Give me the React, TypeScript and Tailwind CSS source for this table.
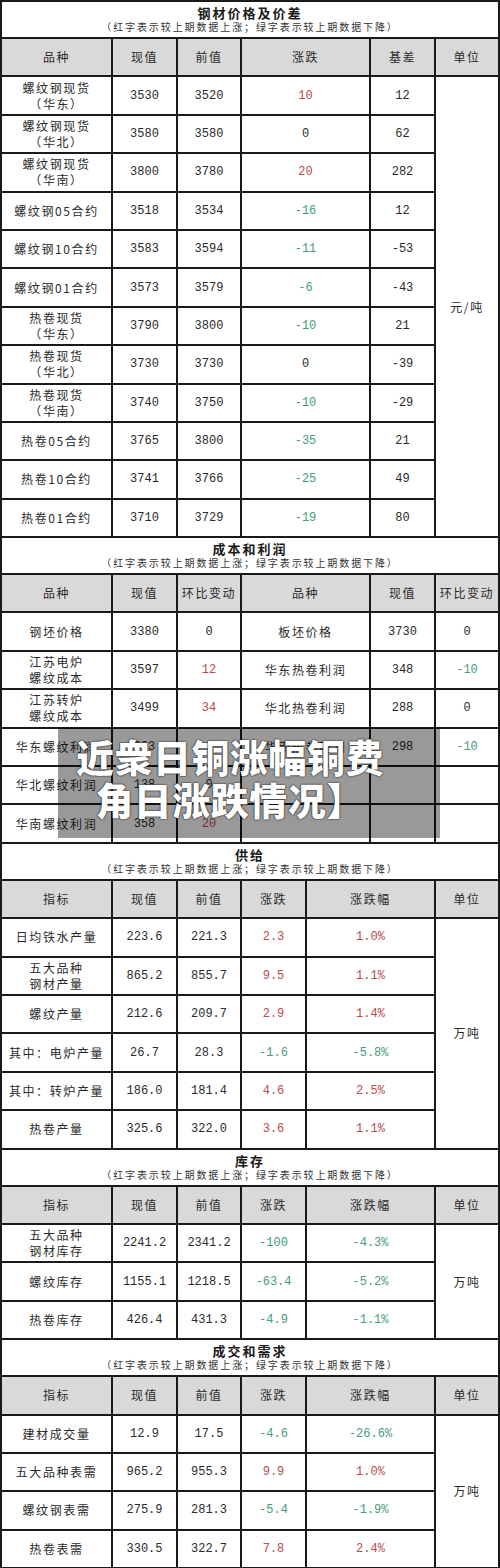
import React from "react";

type Tone = "r" | "g" | undefined;

type Cell = {
  t: string;
  tone?: Tone;
  span?: number;
  rows?: number;
  num?: boolean;
};

const cjk = "font-['Noto_Sans_CJK_SC','Noto_Sans',sans-serif]";
const mono = "font-['Liberation_Mono','Noto_Sans_CJK_SC',monospace]";

const NOTE = "（红字表示较上期数据上涨；绿字表示较上期数据下降）";

function toneClass(tone: Tone) {
  if (tone === "r") return "text-[#b84b4b]";
  if (tone === "g") return "text-[#449c7c]";
  return "text-[#2a2a2a]";
}

function Td({ cell, head }: { cell: Cell; head?: boolean }) {
  const lines = cell.t.split("\n");
  return (
    <td
      colSpan={cell.span}
      rowSpan={cell.rows}
      className={`border-2 border-[#1a1a1a] p-0 text-center align-middle leading-[16px] ${
        head ? "bg-[#d9d9d9]" : "bg-white"
      } ${cell.num ? `${mono} text-[12px]` : `${cjk} text-[12px] tracking-[1.6px]`} ${toneClass(
        cell.tone
      )}`}
    >
      {lines.map((l, i) => (
        <div key={i}>{l}</div>
      ))}
    </td>
  );
}

function Title({ name }: { name: string }) {
  return (
    <tr className="h-[37px]">
      <td colSpan={7} className="border-2 border-[#1a1a1a] bg-white p-0 text-center">
        <div className={`${cjk} text-[13px] font-bold leading-[15px] tracking-[2px] text-[#1a1a1a]`}>
          {name}
        </div>
        <div className={`${cjk} text-[10px] leading-[14px] tracking-[1.9px] text-[#333]`}>{NOTE}</div>
      </td>
    </tr>
  );
}

function Row({ cells, head }: { cells: Cell[]; head?: boolean }) {
  return (
    <tr className="h-[38.4px]">
      {cells.map((c, i) => (
        <Td key={i} cell={c} head={head} />
      ))}
    </tr>
  );
}

const n = (t: string, tone?: Tone, span?: number): Cell => ({ t, tone, span, num: true });
const s = (t: string, span?: number): Cell => ({ t, span });

const steelHead: Cell[] = [s("品种"), s("现值"), s("前值"), s("涨跌", 2), s("基差"), s("单位")];

const steelRows: Cell[][] = [
  [s("螺纹钢现货\n（华东）"), n("3530"), n("3520"), n("10", "r", 2), n("12"), { t: "元/吨", rows: 12 }],
  [s("螺纹钢现货\n（华北）"), n("3580"), n("3580"), n("0", undefined, 2), n("62")],
  [s("螺纹钢现货\n（华南）"), n("3800"), n("3780"), n("20", "r", 2), n("282")],
  [s("螺纹钢05合约"), n("3518"), n("3534"), n("-16", "g", 2), n("12")],
  [s("螺纹钢10合约"), n("3583"), n("3594"), n("-11", "g", 2), n("-53")],
  [s("螺纹钢01合约"), n("3573"), n("3579"), n("-6", "g", 2), n("-43")],
  [s("热卷现货\n（华东）"), n("3790"), n("3800"), n("-10", "g", 2), n("21")],
  [s("热卷现货\n（华北）"), n("3730"), n("3730"), n("0", undefined, 2), n("-39")],
  [s("热卷现货\n（华南）"), n("3740"), n("3750"), n("-10", "g", 2), n("-29")],
  [s("热卷05合约"), n("3765"), n("3800"), n("-35", "g", 2), n("21")],
  [s("热卷10合约"), n("3741"), n("3766"), n("-25", "g", 2), n("49")],
  [s("热卷01合约"), n("3710"), n("3729"), n("-19", "g", 2), n("80")],
];

const costHead: Cell[] = [s("品种"), s("现值"), s("环比变动"), s("品种", 2), s("现值"), s("环比变动")];

const costRows: Cell[][] = [
  [s("钢坯价格"), n("3380"), n("0"), s("板坯价格", 2), n("3730"), n("0")],
  [s("江苏电炉\n螺纹成本"), n("3597"), n("12", "r"), s("华东热卷利润", 2), n("348"), n("-10", "g")],
  [s("江苏转炉\n螺纹成本"), n("3499"), n("34", "r"), s("华北热卷利润", 2), n("288"), n("0")],
  [s("华东螺纹利润"), n("323"), n("0"), s("华南热卷利润", 2), n("298"), n("-10", "g")],
  [s("华北螺纹利润"), n("138"), n("0"), s("", 2), n(""), n("")],
  [s("华南螺纹利润"), n("358"), n("20", "r"), s("", 2), n(""), n("")],
];

const idxHead: Cell[] = [s("指标"), s("现值"), s("前值"), s("涨跌"), s("涨跌幅", 2), s("单位")];

const supplyRows: Cell[][] = [
  [s("日均铁水产量"), n("223.6"), n("221.3"), n("2.3", "r"), n("1.0%", "r", 2), { t: "万吨", rows: 6 }],
  [s("五大品种\n钢材产量"), n("865.2"), n("855.7"), n("9.5", "r"), n("1.1%", "r", 2)],
  [s("螺纹产量"), n("212.6"), n("209.7"), n("2.9", "r"), n("1.4%", "r", 2)],
  [s("其中：电炉产量"), n("26.7"), n("28.3"), n("-1.6", "g"), n("-5.8%", "g", 2)],
  [s("其中：转炉产量"), n("186.0"), n("181.4"), n("4.6", "r"), n("2.5%", "r", 2)],
  [s("热卷产量"), n("325.6"), n("322.0"), n("3.6", "r"), n("1.1%", "r", 2)],
];

const stockRows: Cell[][] = [
  [s("五大品种\n钢材库存"), n("2241.2"), n("2341.2"), n("-100", "g"), n("-4.3%", "g", 2), { t: "万吨", rows: 3 }],
  [s("螺纹库存"), n("1155.1"), n("1218.5"), n("-63.4", "g"), n("-5.2%", "g", 2)],
  [s("热卷库存"), n("426.4"), n("431.3"), n("-4.9", "g"), n("-1.1%", "g", 2)],
];

const demandRows: Cell[][] = [
  [s("建材成交量"), n("12.9"), n("17.5"), n("-4.6", "g"), n("-26.6%", "g", 2), { t: "万吨", rows: 4 }],
  [s("五大品种表需"), n("965.2"), n("955.3"), n("9.9", "r"), n("1.0%", "r", 2)],
  [s("螺纹钢表需"), n("275.9"), n("281.3"), n("-5.4", "g"), n("-1.9%", "g", 2)],
  [s("热卷表需"), n("330.5"), n("322.7"), n("7.8", "r"), n("2.4%", "r", 2)],
];

export default function App() {
  return (
    <div className="relative w-[500px] bg-white">
      <table className="w-[498px] table-fixed border-collapse">
        <colgroup>
          <col className="w-[111px]" />
          <col className="w-[65px]" />
          <col className="w-[64px]" />
          <col className="w-[65px]" />
          <col className="w-[64px]" />
          <col className="w-[65px]" />
          <col className="w-[64px]" />
        </colgroup>
        <tbody>
          <Title name="钢材价格及价差" />
          <Row cells={steelHead} head />
          {steelRows.map((r, i) => (
            <Row key={"a" + i} cells={r} />
          ))}

          <Title name="成本和利润" />
          <Row cells={costHead} head />
          {costRows.map((r, i) => (
            <Row key={"b" + i} cells={r} />
          ))}

          <Title name="供给" />
          <Row cells={idxHead} head />
          {supplyRows.map((r, i) => (
            <Row key={"c" + i} cells={r} />
          ))}

          <Title name="库存" />
          <Row cells={idxHead} head />
          {stockRows.map((r, i) => (
            <Row key={"d" + i} cells={r} />
          ))}

          <Title name="成交和需求" />
          <Row cells={idxHead} head />
          {demandRows.map((r, i) => (
            <Row key={"e" + i} cells={r} />
          ))}
        </tbody>
      </table>

      {/* watermark banner over the cost table */}
      <div className="absolute left-[58px] top-[728px] h-[110px] w-[382px] bg-black/40">
        <div
          className={`${cjk} w-[344px] pt-[6px] text-center text-[38px] font-black leading-[43px] tracking-[0.5px] text-white [text-shadow:0_0_2px_#222,0_0_1px_#000]`}
        >
          <div>近衆日铜涨幅铜费</div>
          <div>角日涨跌情况】</div>
        </div>
      </div>
    </div>
  );
}
